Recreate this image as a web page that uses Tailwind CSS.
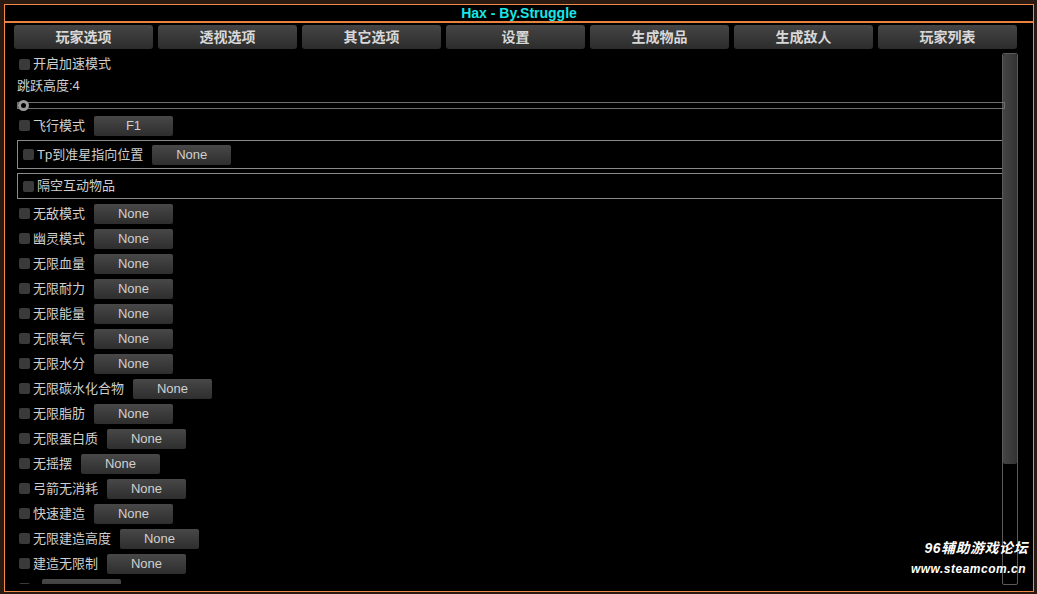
<!DOCTYPE html>
<html lang="zh">
<head>
  <meta charset="UTF-8" />
  <title>Hax - By.Struggle</title>
  <script src="https://cdn.jsdelivr.net/npm/@tailwindcss/browser@4"></script>
</head>
<body class="w-[1037px] h-[594px] overflow-hidden bg-[#2a1a12] font-['Liberation_Sans','Noto_Sans_CJK_SC',sans-serif] text-[13px] text-[#cfcfcf]">
  <div class="relative w-full h-full pt-[4px] pl-[4px] pr-[3px] pb-[2px]">
    <!-- ventana -->
    <div class="h-full flex flex-col border border-[#f08a4b] bg-black">
      <div class="h-[16px] shrink-0 border-b-2 border-[#e9813f] flex items-center justify-center box-content">
        <span class="text-[14px] font-bold leading-none text-[#19e6e6]">Hax - By.Struggle</span>
      </div>

      <!-- pestañas -->
      <div class="flex gap-[5px] pl-[9px] pt-[2px] shrink-0">
        <button class="w-[139px] h-[24px] rounded-[3px] bg-gradient-to-b from-[#454545] to-[#2c2c2c] text-[14px] font-bold text-[#d8d8d8]">玩家选项</button>
        <button class="w-[139px] h-[24px] rounded-[3px] bg-gradient-to-b from-[#454545] to-[#2c2c2c] text-[14px] font-bold text-[#d8d8d8]">透视选项</button>
        <button class="w-[139px] h-[24px] rounded-[3px] bg-gradient-to-b from-[#454545] to-[#2c2c2c] text-[14px] font-bold text-[#d8d8d8]">其它选项</button>
        <button class="w-[139px] h-[24px] rounded-[3px] bg-gradient-to-b from-[#454545] to-[#2c2c2c] text-[14px] font-bold text-[#d8d8d8]">设置</button>
        <button class="w-[139px] h-[24px] rounded-[3px] bg-gradient-to-b from-[#454545] to-[#2c2c2c] text-[14px] font-bold text-[#d8d8d8]">生成物品</button>
        <button class="w-[139px] h-[24px] rounded-[3px] bg-gradient-to-b from-[#454545] to-[#2c2c2c] text-[14px] font-bold text-[#d8d8d8]">生成敌人</button>
        <button class="w-[139px] h-[24px] rounded-[3px] bg-gradient-to-b from-[#454545] to-[#2c2c2c] text-[14px] font-bold text-[#d8d8d8]">玩家列表</button>
      </div>

      <div class="flex flex-1 min-h-0 pt-[4px] pb-[7px]">
        <div id="lista" class="w-[1000px] shrink-0 pl-[12px] overflow-hidden">
          <div class="h-[22px] mt-[0px] flex items-center gap-[3px] pl-[2px]"><i class="w-[11px] h-[11px] rounded-[2px] bg-[#3a3a3a]"></i><span>开启加速模式</span></div>
          <div class="h-[22px] flex items-center">跳跃高度:4</div>
          <div class="relative h-[7px] mt-[5px] mb-[4px] border border-[#6e6e6e]">
            <i class="absolute left-0 top-[-3px] w-[11px] h-[11px] rounded-full border-[3px] border-[#9a9a9a] bg-black"></i>
          </div>
          <div class="h-[25px] flex items-center gap-[3px] pl-[2px]"><i class="w-[11px] h-[11px] rounded-[2px] bg-[#3a3a3a]"></i><span>飞行模式</span><button class="ml-[6px] w-[79px] h-[20px] rounded-[2px] bg-gradient-to-b from-[#484848] to-[#2e2e2e] text-[13px] text-[#d0d0d0]">F1</button></div>
          <div class="h-[29px] mt-[2px] border border-[#8a8a8a] flex items-center gap-[3px] pl-[5px]"><i class="w-[11px] h-[11px] rounded-[2px] bg-[#3a3a3a]"></i><span>Tp到准星指向位置</span><button class="ml-[6px] w-[79px] h-[20px] rounded-[2px] bg-gradient-to-b from-[#484848] to-[#2e2e2e] text-[13px] text-[#d0d0d0]">None</button></div>
          <div class="h-[26px] mt-[4px] mb-[2px] border border-[#8a8a8a] flex items-center gap-[3px] pl-[5px]"><i class="w-[11px] h-[11px] rounded-[2px] bg-[#3a3a3a]"></i><span>隔空互动物品</span></div>
          <div id="filas"></div>
        </div>
        <!-- barra de scroll -->
        <div class="ml-[-3px] mt-[0px] w-[16px] h-[532px] border border-[#5a5a5a] rounded-[2px]">
          <div class="h-[410px] bg-gradient-to-r from-[#454545] to-[#333333] rounded-[2px]"></div>
        </div>
      </div>
    </div>

    <!-- marca de agua -->
    <div class="absolute right-[9px] top-[541px] text-right italic font-bold text-white leading-none">
      <div class="text-[14px] tracking-[0.5px]">96辅助游戏论坛</div>
      <div class="text-[12px] mt-[8px] mr-[2px] tracking-[0.5px]">www.steamcom.cn</div>
    </div>
  </div>

  <script>
    const filas = ['无敌模式','幽灵模式','无限血量','无限耐力','无限能量','无限氧气','无限水分','无限碳水化合物','无限脂肪','无限蛋白质','无摇摆','弓箭无消耗','快速建造','无限建造高度','建造无限制',''];
    document.getElementById('filas').innerHTML = filas.map(nombre => `
      <div class="h-[25px] flex items-center gap-[3px] pl-[2px]">
        <i class="w-[11px] h-[11px] rounded-[2px] bg-[#3a3a3a]"></i><span>${nombre}</span>
        <button class="ml-[6px] w-[79px] h-[20px] rounded-[2px] bg-gradient-to-b from-[#484848] to-[#2e2e2e] text-[13px] text-[#d0d0d0]">None</button>
      </div>`).join('');
  </script>
</body>
</html>
